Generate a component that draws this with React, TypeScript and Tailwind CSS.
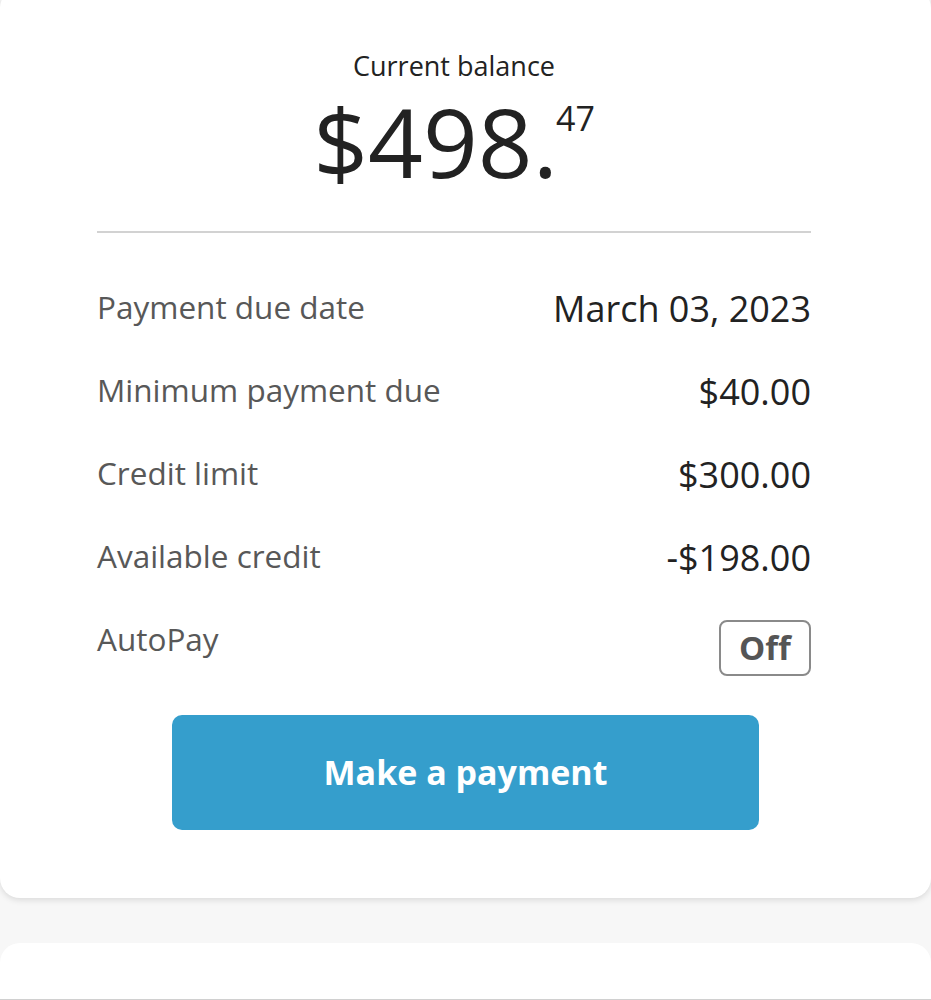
const rows = [
  { label: "Payment due date", value: "March 03, 2023" },
  { label: "Minimum payment due", value: "$40.00" },
  { label: "Credit limit", value: "$300.00" },
  { label: "Available credit", value: "-$198.00" },
]

export default function App() {
  return (
    <div className="min-h-[1000px] bg-[#f7f7f7] font-['Open_Sans',sans-serif] overflow-hidden">
      {/* balance card */}
      <div className="-mt-[12px] bg-white rounded-[20px] shadow-[0_2px_6px_rgba(0,0,0,0.12)] pt-[62px] pb-[68px]">
        <div className="ml-[97px] w-[714px]">
          <div className="text-center text-[27px] leading-[32px] text-[#222]">Current balance</div>
          <div className="mt-[11px] flex justify-center items-start text-[#222]">
            <span className="text-[96px] leading-[96px]">$498.</span>
            <span className="-ml-[2px] mt-[8px] text-[34px] leading-[34px]">47</span>
          </div>
          <div className="mt-[42px] h-[2px] bg-[#d2d2d2]" />

          <div className="mt-[54px] flex flex-col">
            {rows.map((r) => (
              <div key={r.label} className="h-[83px] flex justify-between items-start">
                <span className="text-[31.5px] leading-[40px] text-[#585858]">{r.label}</span>
                <span className="mt-[2px] text-[36px] leading-[40px] text-[#222]">{r.value}</span>
              </div>
            ))}
            <div className="flex justify-between items-start">
              <span className="text-[31.5px] leading-[40px] text-[#585858]">AutoPay</span>
              <span className="mt-[1px] w-[92px] h-[56px] border-2 border-[#8a8a8a] rounded-[8px] flex items-center justify-center text-[33px] font-bold text-[#555]">
                Off
              </span>
            </div>
          </div>
        </div>

        <button className="mt-[39px] mx-auto flex items-center justify-center w-[587px] h-[115px] rounded-[10px] bg-[#359ecc] text-white text-[34px] font-bold">
          Make a payment
        </button>
      </div>

      {/* next card, cut off */}
      <div className="mt-[45px] h-[58px] bg-white rounded-t-[20px] border-b-2 border-[#d0d0d0]" />
    </div>
  )
}
